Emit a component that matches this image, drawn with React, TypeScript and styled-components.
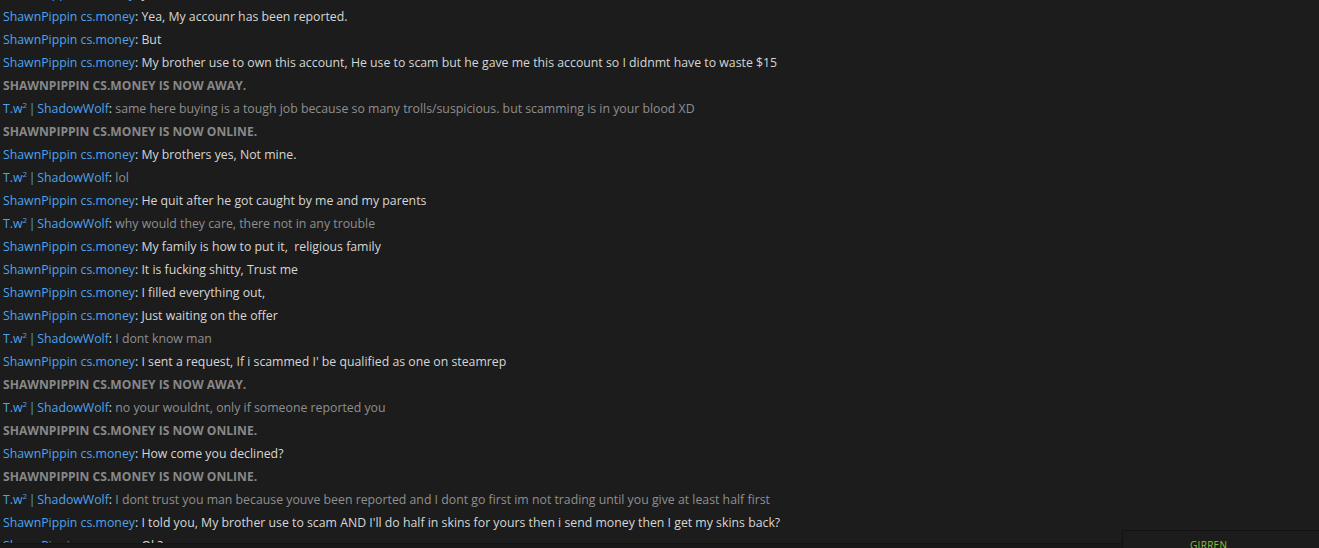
import React, { FC } from 'react';
import styled, { createGlobalStyle } from 'styled-components';

const GlobalStyle = createGlobalStyle`
  html, body {
    margin: 0;
    padding: 0;
    background: #1c1c1c;
    overflow: hidden;
  }
  body {
    font-family: 'Open Sans', 'Noto Sans', sans-serif;
  }
`;

type Who = 'shawn' | 'wolf' | 'status';

interface Line {
  who: Who;
  text: string;
}

const SHAWN = 'ShawnPippin cs.money';

const lines: Line[] = [
  { who: 'shawn', text: 'yea' },
  { who: 'shawn', text: 'Yea, My accounr has been reported.' },
  { who: 'shawn', text: 'But' },
  {
    who: 'shawn',
    text: 'My brother use to own this account, He use to scam but he gave me this account so I didnmt have to waste $15',
  },
  { who: 'status', text: 'ShawnPippin cs.money is now Away.' },
  {
    who: 'wolf',
    text: 'same here buying is a tough job because so many trolls/suspicious. but scamming is in your blood XD',
  },
  { who: 'status', text: 'ShawnPippin cs.money is now Online.' },
  { who: 'shawn', text: 'My brothers yes, Not mine.' },
  { who: 'wolf', text: 'lol' },
  { who: 'shawn', text: 'He quit after he got caught by me and my parents' },
  { who: 'wolf', text: 'why would they care, there not in any trouble' },
  { who: 'shawn', text: 'My family is how to put it,\u00a0 religious family' },
  { who: 'shawn', text: 'It is fucking shitty, Trust me' },
  { who: 'shawn', text: 'I filled everything out,' },
  { who: 'shawn', text: 'Just waiting on the offer' },
  { who: 'wolf', text: 'I dont know man' },
  { who: 'shawn', text: "I sent a request, If i scammed I' be qualified as one on steamrep" },
  { who: 'status', text: 'ShawnPippin cs.money is now Away.' },
  { who: 'wolf', text: 'no your wouldnt, only if someone reported you' },
  { who: 'status', text: 'ShawnPippin cs.money is now Online.' },
  { who: 'shawn', text: 'How come you declined?' },
  { who: 'status', text: 'ShawnPippin cs.money is now Online.' },
  {
    who: 'wolf',
    text: 'I dont trust you man because youve been reported and I dont go first im not trading until you give at least half first',
  },
  {
    who: 'shawn',
    text: "I told you, My brother use to scam AND I'll do half in skins for yours then i send money then I get my skins back?",
  },
  { who: 'shawn', text: 'Ok?' },
];

const Page = styled.div`
  position: relative;
  width: 1319px;
  height: 548px;
  display: flex;
  flex-direction: column;
  overflow: hidden;
  background: #1c1c1c;
`;

const History = styled.div`
  height: 543px;
  overflow: hidden;
  flex-shrink: 0;
`;

const List = styled.div`
  display: flex;
  flex-direction: column;
  margin-top: -18px;
  padding-left: 3px;
`;

const Row = styled.div<{ $status?: boolean }>`
  height: 23px;
  line-height: 23px;
  font-size: 12.3px;
  white-space: nowrap;
  ${(p) =>
    p.$status &&
    `
    color: #888888;
    font-weight: 700;
    text-transform: uppercase;
    font-size: 12.1px;
  `}
`;

const Name = styled.span<{ $tight?: boolean }>`
  color: #4ea3ec;
  word-spacing: ${(p) => (p.$tight ? '-1.5px' : '0')};
`;

const Sup = styled.sup`
  font-size: 8px;
  line-height: 0;
  vertical-align: 5px;
`;

const Colon = styled.span`
  color: #d6d6d6;
`;

const Body = styled.span<{ $muted?: boolean }>`
  color: ${(p) => (p.$muted ? '#8f8f8f' : '#d6d6d6')};
`;

const Composer = styled.div`
  flex: 1;
  background: #181818;
  border-top: 1px solid #141414;
`;

const SidePanel = styled.div`
  position: absolute;
  left: 1122px;
  top: 530px;
  right: 0;
  bottom: 0;
  background: #1c1c1c;
  border-top: 1px solid #121212;
  border-left: 1px solid #121212;
  padding: 8px 0 0 67px;
`;

const PanelLabel = styled.div`
  color: #86c232;
  font-size: 10px;
  letter-spacing: 0.3px;
  line-height: 12px;
`;

const ChatRow: FC<{ line: Line }> = ({ line }) => {
  if (line.who === 'status') return <Row $status>{line.text}</Row>;
  return (
    <Row>
      {line.who === 'shawn' ? (
        <Name>{SHAWN}</Name>
      ) : (
        <Name $tight>
          T.w<Sup>2</Sup> | ShadowWolf
        </Name>
      )}
      <Colon>: </Colon>
      <Body $muted={line.who === 'wolf'}>{line.text}</Body>
    </Row>
  );
};

export default function App() {
  return (
    <Page>
      <GlobalStyle />
      <History>
        <List>
          {lines.map((l, i) => (
            <ChatRow key={i} line={l} />
          ))}
        </List>
      </History>
      <Composer />
      <SidePanel>
        <PanelLabel>GIRREN</PanelLabel>
      </SidePanel>
    </Page>
  );
}
